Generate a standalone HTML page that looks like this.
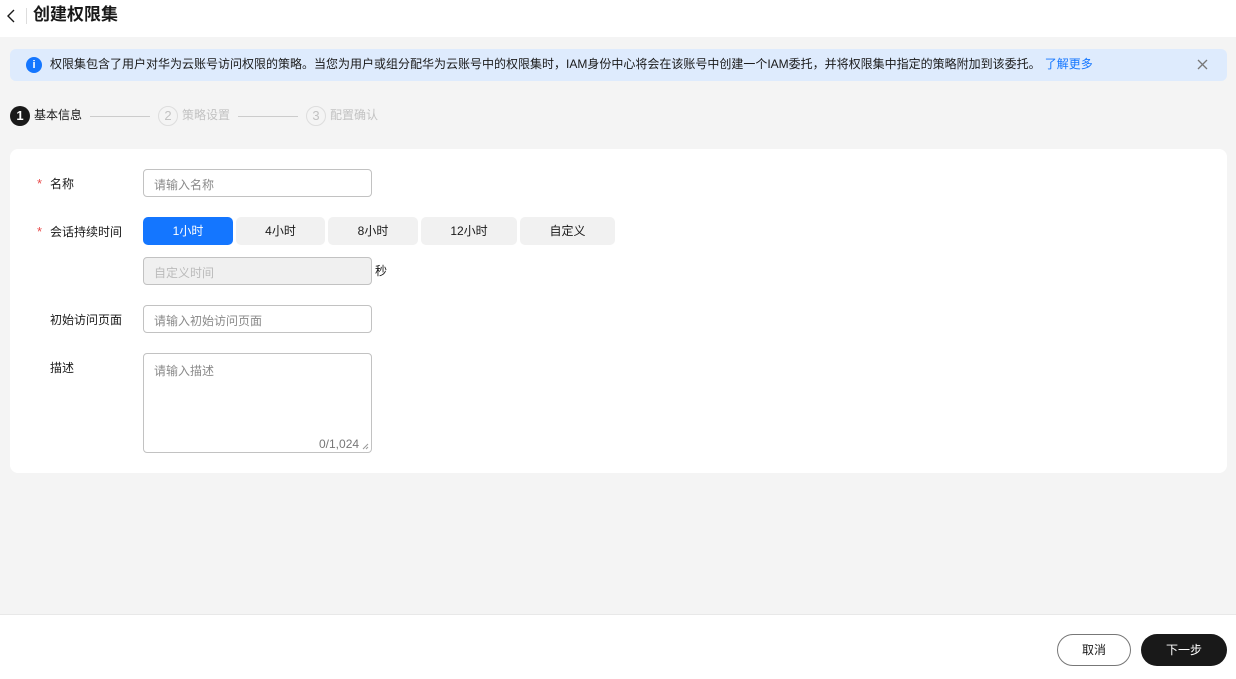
<!DOCTYPE html><html><head><meta charset="utf-8"><style>
*{box-sizing:border-box;margin:0;padding:0}
body{width:1236px;height:679px;background:#f4f4f4;font-family:"Liberation Sans","Noto Sans CJK SC",sans-serif;font-size:12px;color:#191919;position:relative;overflow:hidden}
.abs{position:absolute}
.hdr{left:0;top:0;width:1236px;height:37px;background:#fff}
.notice{left:10px;top:49px;width:1217px;height:32px;background:#deebfd;border-radius:6px}
.card{left:10px;top:149px;width:1217px;height:324px;background:#fff;border-radius:8px}
.inp{border:1px solid #c2c2c2;border-radius:4px;width:229px;height:28px;color:#8a8a8a;padding:6px 10px;font-size:12px;background:#fff}
.lbl{font-size:12px;color:#191919}
.star{color:#e84a4a;font-size:13px}
.seg{top:217px;height:28px;background:#f1f1f1;border-radius:5px;text-align:center;line-height:28px;color:#191919}
.foot{left:0;top:614px;width:1236px;height:65px;background:#fff;border-top:1px solid #e8e8e8}
</style></head><body>
<div class="abs hdr"></div>
<svg class="abs" style="left:6px;top:9px" width="10" height="14"><path d="M8 1L2 7l6 6" stroke="#191919" stroke-width="1.4" fill="none"/></svg>
<div class="abs" style="left:26px;top:8px;width:1px;height:16px;background:#ddd"></div>
<div class="abs" style="left:33px;top:4px;font-size:17px;font-weight:bold;line-height:22px">创建权限集</div>
<div class="abs notice"></div>
<div class="abs" style="left:26px;top:57px;width:16px;height:16px;border-radius:50%;background:#1476ff;color:#fff;font-size:11px;font-weight:bold;text-align:center;line-height:16px">i</div>
<div class="abs" style="left:50px;top:56px;line-height:17px;color:#191919">权限集包含了用户对华为云账号访问权限的策略。当您为用户或组分配华为云账号中的权限集时，IAM身份中心将会在该账号中创建一个IAM委托，并将权限集中指定的策略附加到该委托。<span style="color:#1476ff;margin-left:4px">了解更多</span></div>
<svg class="abs" style="left:1197px;top:59px" width="11" height="11"><path d="M1 1l9 9M10 1l-9 9" stroke="#777" stroke-width="1.3"/></svg>
<div class="abs" style="left:10px;top:106px;width:20px;height:20px;border-radius:50%;background:#191919;color:#fff;text-align:center;line-height:20px;font-weight:bold;font-size:13px">1</div>
<div class="abs" style="left:34px;top:107px;line-height:17px">基本信息</div>
<div class="abs" style="left:90px;top:116px;width:60px;height:1px;background:#ccc"></div>
<div class="abs" style="left:158px;top:106px;width:20px;height:20px;border-radius:50%;border:1px solid #ddd;color:#c2c2c2;text-align:center;line-height:18px;font-size:13px">2</div>
<div class="abs" style="left:182px;top:107px;line-height:17px;color:#c2c2c2">策略设置</div>
<div class="abs" style="left:238px;top:116px;width:60px;height:1px;background:#ccc"></div>
<div class="abs" style="left:306px;top:106px;width:20px;height:20px;border-radius:50%;border:1px solid #ddd;color:#c2c2c2;text-align:center;line-height:18px;font-size:13px">3</div>
<div class="abs" style="left:330px;top:107px;line-height:17px;color:#c2c2c2">配置确认</div>
<div class="abs card"></div>
<div class="abs star" style="left:37px;top:176px">*</div>
<div class="abs lbl" style="left:50px;top:175px">名称</div>
<div class="abs inp" style="left:143px;top:169px">请输入名称</div>
<div class="abs star" style="left:37px;top:224px">*</div>
<div class="abs lbl" style="left:50px;top:223px">会话持续时间</div>
<div class="abs seg" style="left:143px;width:90px;background:#1476ff;color:#fff">1小时</div>
<div class="abs seg" style="left:236px;width:89px">4小时</div>
<div class="abs seg" style="left:328px;width:90px">8小时</div>
<div class="abs seg" style="left:421px;width:96px">12小时</div>
<div class="abs seg" style="left:520px;width:95px">自定义</div>
<div class="abs inp" style="left:143px;top:257px;background:#f0f0f0;color:#bbb">自定义时间</div>
<div class="abs" style="left:375px;top:262px">秒</div>
<div class="abs lbl" style="left:50px;top:311px">初始访问页面</div>
<div class="abs inp" style="left:143px;top:305px">请输入初始访问页面</div>
<div class="abs lbl" style="left:50px;top:359px">描述</div>
<div class="abs inp" style="left:143px;top:353px;height:100px;padding-top:8px">请输入描述</div>
<div class="abs" style="left:319px;top:437px;color:#777">0/1,024</div>
<svg class="abs" style="left:362px;top:443px" width="7" height="7"><path d="M6 1L1 6M6 4L4 6" stroke="#999" stroke-width="1"/></svg>
<div class="abs foot"></div>
<div class="abs" style="left:1057px;top:634px;width:74px;height:32px;border:1px solid #777;border-radius:16px;text-align:center;line-height:30px;background:#fff">取消</div>
<div class="abs" style="left:1141px;top:634px;width:86px;height:32px;background:#191919;color:#fff;border-radius:16px;text-align:center;line-height:32px">下一步</div>
</body></html>
